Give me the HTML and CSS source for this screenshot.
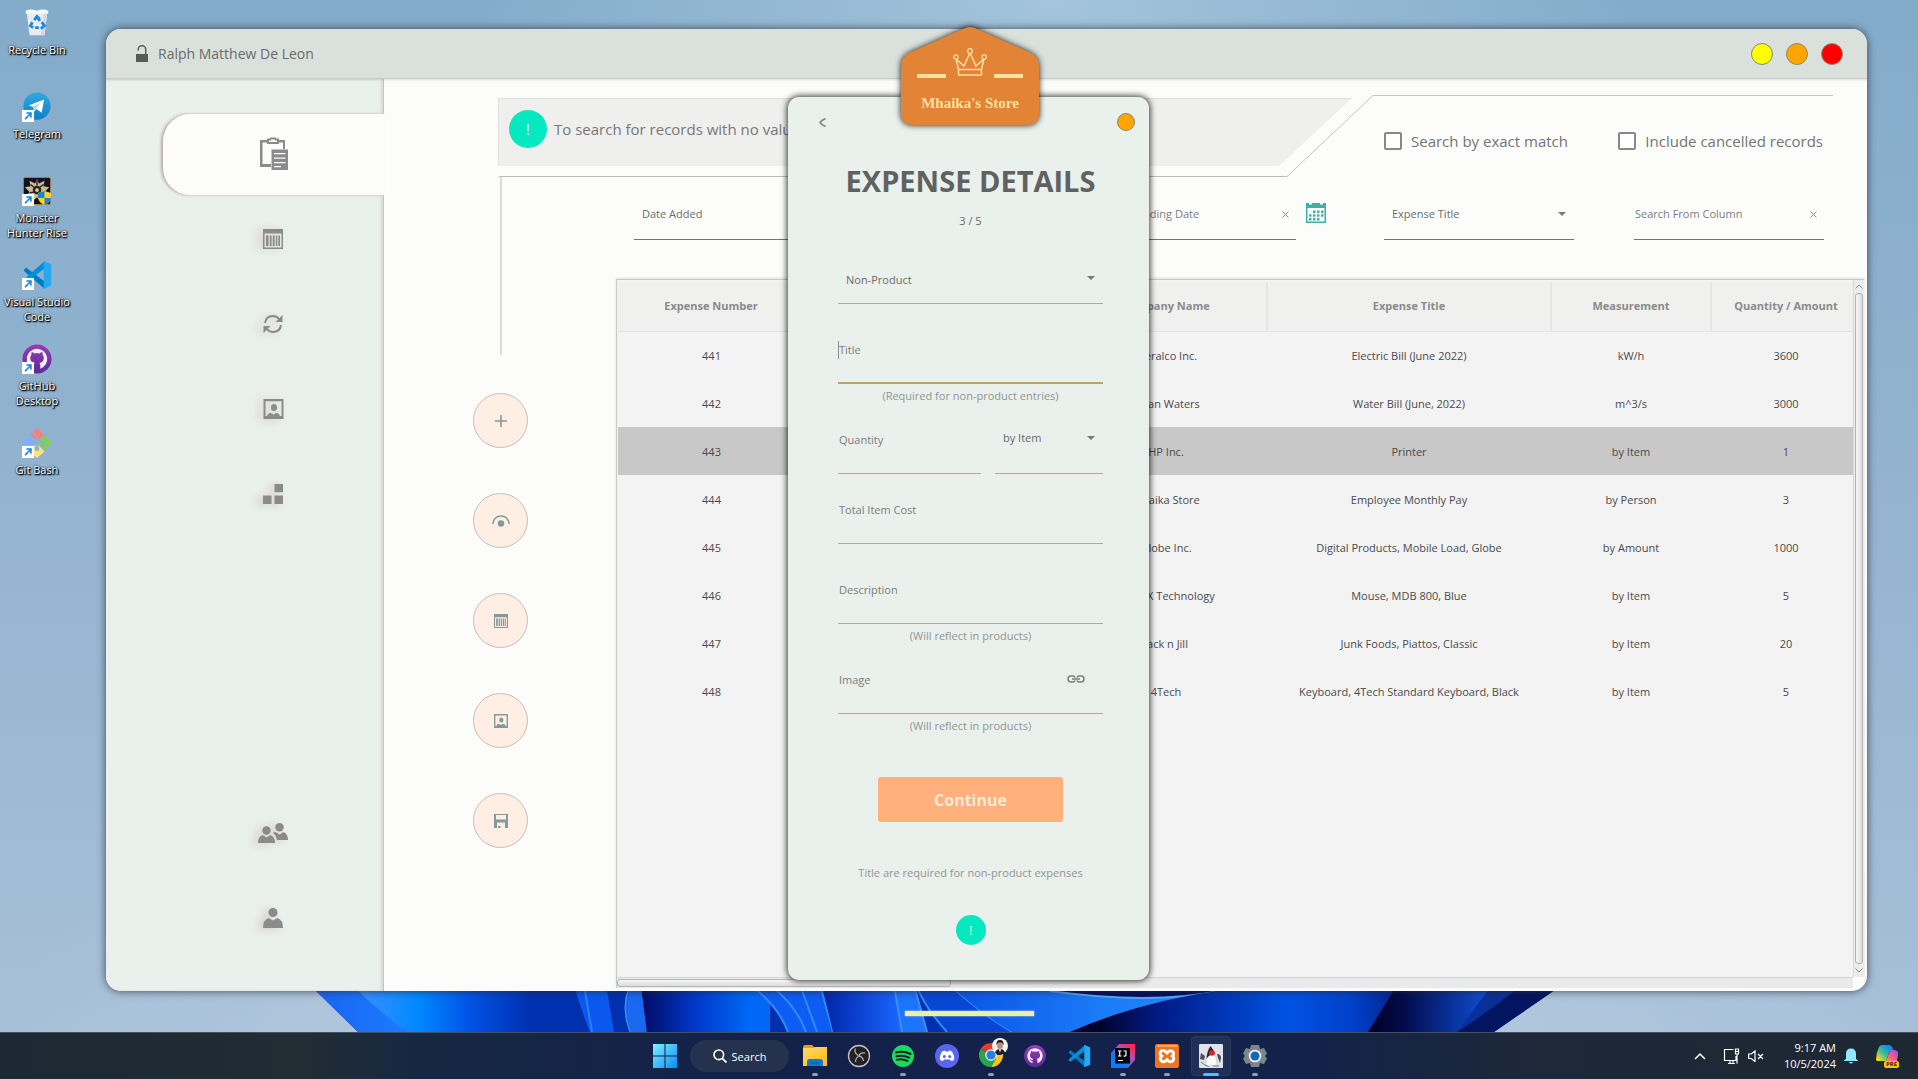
FILE: index.html
```html
<!DOCTYPE html>
<html lang="en">
<head>
<meta charset="utf-8">
<title>Mhaika's Store</title>
<link rel="stylesheet" href="styles.css">
</head>
<body>
<svg class="defs" aria-hidden="true">
  <defs>
    <linearGradient id="g-tg" x1="0" y1="0" x2="0" y2="1"><stop offset="0" stop-color="#2fa8e0"/><stop offset="1" stop-color="#0f80c4"/></linearGradient>
    <linearGradient id="g-gh" x1="0" y1="0" x2="0" y2="1"><stop offset="0" stop-color="#9a3bb8"/><stop offset="1" stop-color="#5b2a92"/></linearGradient>
    <linearGradient id="g-folder" x1="0" y1="0" x2="1" y2="1"><stop offset="0" stop-color="#ffd968"/><stop offset="1" stop-color="#fbb917"/></linearGradient>
    <linearGradient id="g-win" x1="0" y1="0" x2="1" y2="1"><stop offset="0" stop-color="#7df0ff"/><stop offset="1" stop-color="#0a8cf5"/></linearGradient>
    <linearGradient id="g-ij" x1="0" y1="1" x2="1" y2="0"><stop offset="0.3" stop-color="#087cfa"/><stop offset="0.65" stop-color="#b04fc0"/><stop offset="0.85" stop-color="#fe2857"/></linearGradient>
    <linearGradient id="g-cp1" x1="0" y1="1" x2="1" y2="0"><stop offset="0.1" stop-color="#ffd21e"/><stop offset="0.45" stop-color="#3fc08a"/><stop offset="0.8" stop-color="#1787f0"/></linearGradient>
    <linearGradient id="g-cp2" x1="0" y1="1" x2="1" y2="0"><stop offset="0" stop-color="#ff8a4c"/><stop offset="0.5" stop-color="#f0559b"/><stop offset="1" stop-color="#8a50e8"/></linearGradient>
    <symbol id="i-vscode" viewBox="0 0 32 32">
      <path d="M2 10.5 4.6 8.3 24 23v7.6L3 12.4Z" fill="#0079c4"/>
      <path d="M2 21.5l2.6 2.2L24 9V1.4L3 19.6Z" fill="#0090d8"/>
      <path d="M23 1l8 3.5v23L23 31Z" fill="#24a9f2"/>
    </symbol>
    <symbol id="i-github" viewBox="0 0 32 32">
      <circle cx="16" cy="16" r="15.5" fill="url(#g-gh)"/>
      <path d="M16 5a11 11 0 0 0-3.5 21.4V23c-2.6.5-3.3-1-3.8-1.9l1-.4c.8.7 1.4 1.3 2.9 1 .1-.7.5-1.2.9-1.5-3-.4-4.7-2-4.7-5.2 0-1.300.4-2.300 1.200-3.200-.2-.9-.2-2 .3-3 1.200 0 2.200.6 3 1.200a10 10 0 0 1 5.400 0c.8-.6 1.800-1.200 3-1.200.5 1 .5 2.100.3 3 .8.9 1.200 1.900 1.200 3.200 0 3.200-1.700 4.800-4.700 5.200.6.5 1 1.300 1 2.500v3.700A11 11 0 0 0 16 5Z" fill="#f4eefa"/>
    </symbol>
    <symbol id="i-shortcut" viewBox="0 0 12 12">
      <rect width="12" height="12" fill="#fff"/>
      <path d="M3 9.200 8 4.200M4.300 3.200h4.500v4.500" fill="none" stroke="#1583d8" stroke-width="1.500"/>
    </symbol>
    <symbol id="i-column" viewBox="0 0 20 20">
      <path fill-rule="evenodd" d="M0 0h20v20H0ZM1.500 4.500V18.500h17V4.500Z"/>
      <path d="M3 6.500h2.500V17H3ZM6.800 6.500h1.800V17H6.800ZM9.800 6.500h1.800V17H9.800ZM12.800 6.500h1.500V17h-1.500ZM15.300 6.500H17V17h-1.700Z"/>
    </symbol>
    <symbol id="i-portrait" viewBox="0 0 20 20">
      <path fill-rule="evenodd" d="M0 0h20v20H0ZM2 2.200V17h1.600c.3-2 2-2.800 3.500-3l2.900 1.600 2.900-1.600c1.500.2 3.200 1 3.500 3H18V2.200Z"/>
      <ellipse cx="10.500" cy="8.500" rx="3" ry="3.600"/>
    </symbol>
    <symbol id="i-alert" viewBox="0 0 30 30">
      <circle cx="15" cy="15" r="15" fill="#06e8c0"/>
      <path d="M14.300 11h1.500l-.3 6h-.9ZM14.300 18.300h1.500v1.500h-1.500Z" fill="#dffaf2"/>
    </symbol>
  </defs>
</svg>

<div class="desktop">
  <svg class="bloom" viewBox="0 0 1260 47" aria-hidden="true">
    <defs>
      <linearGradient id="b1"><stop offset="0" stop-color="#1a62f0"/><stop offset="1" stop-color="#1b7cff"/></linearGradient>
      <linearGradient id="b2" gradientUnits="userSpaceOnUse" x1="60" x2="230"><stop offset="0" stop-color="#3b8fff"/><stop offset="0.35" stop-color="#0088ff"/><stop offset="0.65" stop-color="#0052e6"/><stop offset="1" stop-color="#0030b0"/></linearGradient>
      <linearGradient id="b3" gradientUnits="userSpaceOnUse" x1="340" x2="450"><stop offset="0" stop-color="#010a60"/><stop offset="0.5" stop-color="#0138c8"/><stop offset="1" stop-color="#0068f8"/></linearGradient>
      <linearGradient id="b4" gradientUnits="userSpaceOnUse" x1="525" x2="600"><stop offset="0" stop-color="#0226a8"/><stop offset="1" stop-color="#1a66ff"/></linearGradient>
      <linearGradient id="b5" gradientUnits="userSpaceOnUse" x1="660" x2="900"><stop offset="0" stop-color="#0b55e8"/><stop offset="0.6" stop-color="#1b7cf8"/><stop offset="1" stop-color="#2488f5"/></linearGradient>
      <linearGradient id="b6" gradientUnits="userSpaceOnUse" x1="800" x2="1090"><stop offset="0" stop-color="#01042c"/><stop offset="0.2" stop-color="#021a86"/><stop offset="0.65" stop-color="#0052e4"/><stop offset="0.88" stop-color="#003fc8"/><stop offset="1" stop-color="#02289a"/></linearGradient>
      <linearGradient id="b7" gradientUnits="userSpaceOnUse" x1="1075" x2="1185"><stop offset="0" stop-color="#01032a"/><stop offset="0.25" stop-color="#020a4a"/><stop offset="1" stop-color="#0f4cd0"/></linearGradient>
    </defs>
    <path d="M10 0H1262L1194 47H58Z" fill="#0130ae"/>
    <path d="M10 0H52L107 47H58Z" fill="url(#b1)"/>
    <path d="M52 0H230V47H107Q76 24 52 0Z" fill="url(#b2)"/>
    <path d="M274 0H306L314 47H290Q280 22 274 0Z" fill="#0a58ee"/>
    <path d="M284 0 292 47" stroke="#2484fa" stroke-width="2"/>
    <path d="M330 0H341L347 47H330Q320 22 330 0Z" fill="#1868f0"/>
    <path d="M330 0Q320 22 330 47" stroke="#4aa0ff" fill="none"/>
    <path d="M341 0H470V47H347Z" fill="url(#b3)"/>
    <path d="M450 0Q478 20 488 47H533L522 0Z" fill="#0d5cf4"/>
    <path d="M450 0Q478 20 488 47M470 0Q496 20 506 47M500 0 517 47M520 0 533 47" stroke="#2f8cff" stroke-width="2" fill="none"/>
    <path d="M522 0H594L602 47H533Z" fill="url(#b4)"/>
    <path d="M594 0H614L627 47H602Z" fill="#1b74fa"/>
    <path d="M594 0 602 47M614 0 627 47" stroke="#3a90ff" stroke-width="2"/>
    <path d="M614 0H650Q680 28 712 47H647Q628 24 614 0Z" fill="#0846d6"/>
    <path d="M616 0Q626 24 647 47M650 0Q680 28 712 47" stroke="#2f88f8" stroke-width="2" fill="none"/>
    <path d="M650 0H920V8Q850 18 770 47H712Q680 28 650 0Z" fill="url(#b5)"/>
    <path d="M750 0H930L916 6Q850 20 753 6Z" fill="#020c60"/>
    <path d="M750 6Q850 20 920 6" stroke="#58a8ff" stroke-width="2" fill="none"/>
    <path d="M770 47Q840 16 930 4V0H1098L1068 47Z" fill="url(#b6)"/>
    <path d="M1097 0H1192L1157 47H1068Z" fill="url(#b7)"/>
    <path d="M1192 0H1222L1157 47Q1180 24 1192 0Z" fill="#0a3096"/>
    <path d="M1222 0H1262L1194 47H1157Q1190 26 1222 0Z" fill="#031460"/>
  </svg>

  <ul class="shortcuts">
    <li><svg viewBox="0 0 32 32"><path d="M5 4h22l-3 25H8Z" fill="#e9edf0"/><path d="M5 4h22l-3 25h-4L23 5H9Z" fill="#d3d9de"/><path d="M4 3q5-3 12 0 6-3 12 0v3H4Z" fill="#f7f8f9"/><path d="M16 9l3 5M19 12l-3-3-3 4M11 15l-2 4 3 2M21 15l3 4-4 3M14 21h4" stroke="#1f8ae0" stroke-width="3" fill="none"/></svg><span>Recycle Bin</span></li>
    <li><svg viewBox="0 0 32 32"><circle cx="16" cy="15" r="14.500" fill="url(#g-tg)"/><path d="M7 14.500 23.500 8 21 22l-5.500-4-2.500 3-1-5Z" fill="#fff"/><path d="M12 16 20 11l-5 6.500-2 3Z" fill="#b5d6ea"/><use href="#i-shortcut" y="19" width="13" height="13"/></svg><span>Telegram</span></li>
    <li><svg viewBox="0 0 32 32"><rect x="1.500" y="1.500" width="29" height="29" rx="2" fill="#10131d" stroke="#a08a58"/><path d="M16 3l2 5 6-3-1 6 6 1-5 5 4 5-6-1-1 6-5-4-5 4-1-6-6 1 4-5-5-5 6-1-1-6 6 3Z" fill="#c8bb92"/><circle cx="16" cy="15" r="4.500" fill="#2a2520"/><path d="M9 9l4 3M23 9l-4 3M16 4v6M8 18l5-1" stroke="#2a2520" stroke-width="1.500"/><circle cx="16" cy="15" r="2" fill="#d8cca5"/><path d="M24 16l7 2v5q-1 6-7 8-6-2-7-8v-5Z" fill="#ffd21e"/><path d="M24 16v7.500h-7V18ZM24 23.500h7q-1 5-7 7.500Z" fill="#1686d9"/><use href="#i-shortcut" y="19" width="13" height="13"/></svg><span>Monster Hunter Rise</span></li>
    <li><svg viewBox="0 0 32 32"><use href="#i-vscode" width="32" height="32"/><use href="#i-shortcut" y="19" width="13" height="13"/></svg><span>Visual Studio Code</span></li>
    <li><svg viewBox="0 0 32 32"><use href="#i-github" width="32" height="32"/><use href="#i-shortcut" y="19" width="13" height="13"/></svg><span>GitHub Desktop</span></li>
    <li><svg viewBox="0 0 32 32"><path d="M16 0l7 7-7 7-7-7Z" fill="#ff7b78"/><path d="M8 8l7 8-7 8-8-8Z" fill="#7fb0ff"/><path d="M24 8l8 8-8 8-8-8Z" fill="#82cf5c"/><path d="M16 17l8 8-8 7-8-7Z" fill="#ffe27a"/><path d="M11 4l5 6v14M16 12l6 5" stroke="#8db0cc" stroke-width="2" fill="none"/><circle cx="16" cy="22" r="2.500" fill="#8db0cc"/><circle cx="22" cy="17" r="2.500" fill="#8db0cc"/><use href="#i-shortcut" y="19" width="13" height="13"/></svg><span>Git Bash</span></li>
  </ul>

  <section class="window" aria-label="Expenses">
    <header class="titlebar">
      <svg class="lock" viewBox="0 0 12 17"><path d="M0 9h12v8H0Z"/><path d="M2.300 5.500V4a3.700 3.200 0 0 1 7.400 0v6" fill="none" stroke="#575a58" stroke-width="1.500"/></svg>
      <span class="user">Ralph Matthew De Leon</span>
      <div class="dots">
        <button class="dot yellow" aria-label="Minimize"></button>
        <button class="dot orange" aria-label="Restore"></button>
        <button class="dot red" aria-label="Close"></button>
      </div>
    </header>
    <div class="window-body">
      <nav class="sidebar">
        <a href="#expenses" class="active" aria-label="Expenses"><svg width="30" height="34" viewBox="0 0 30 34"><path fill-rule="evenodd" d="M1 3h7V1.500h3V.5h6v1h3V3h6v9H12v18H1ZM3.500 5.500v21.500H12V12h12V5.500H20V7H8V5.500ZM10 3.500V5h8V3.500h-2V2.500h-4v1Z"/><path fill-rule="evenodd" d="M12.500 12.500H29V33H12.500ZM15 16v1.300h11.500V16ZM15 20.500v1.300h11.500v-1.300ZM15 25v1.300h11.500V25ZM15 29v1.300h7V29Z"/></svg></a>
        <a href="#products" aria-label="Products"><svg width="20" height="20"><use href="#i-column"/></svg></a>
        <a href="#sync" aria-label="Transactions"><svg width="20" height="20" viewBox="0 0 20 20"><path d="M2 9Q3 2 10 2q4 0 6 3M18 11q-1 7-8 7-4 0-6-3" fill="none" stroke="#8b8b8b" stroke-width="2"/><path d="M19.500 1v7h-7ZM.5 19v-7h7Z"/></svg></a>
        <a href="#contacts" aria-label="Contacts"><svg width="21" height="20"><use href="#i-portrait"/></svg></a>
        <a href="#inventory" aria-label="Inventory"><svg width="20" height="20" viewBox="0 0 20 20"><path d="M11.500 0H20v8.300h-8.500ZM0 11.500h8.500V20H0ZM11.500 11.500H20V20h-8.500Z"/></svg></a>
        <a href="#team" class="push" aria-label="Team"><svg width="30" height="20" viewBox="0 0 30 20"><circle cx="8.500" cy="7.500" r="4.200"/><path d="M0 20q0-6 4.500-8l4 2.500 4-2.500Q17 14 17 20Z"/><circle cx="21.500" cy="4.200" r="4.200"/><path d="M15 9.500l2.500-.5 4 2.500 4-2.500q4.500 2 4.500 8H19q-.5-4-4-7.500Z"/></svg></a>
        <a href="#profile" aria-label="Profile"><svg width="20" height="20" viewBox="0 0 20 20"><circle cx="10" cy="4.500" r="4.500"/><path d="M0 20q0-8 5.500-10l4.500 2.500L14.500 10Q20 12 20 20Z"/></svg></a>
      </nav>

      <main class="content">
        <div class="top-row">
          <div class="notice-slot">
            <div class="notice"><svg width="38" height="38"><use href="#i-alert"/></svg><span>To search for records with no value</span></div>
          </div>
          <svg class="slope" viewBox="0 0 86 82" aria-hidden="true"><path d="M0 81.500 86 .5" fill="none" stroke="#c4c4c4"/></svg>
          <div class="options">
            <label><input type="checkbox"><span>Search by exact match</span></label>
            <label><input type="checkbox"><span>Include cancelled records</span></label>
          </div>
        </div>
        <div class="lower">
          <div class="actions">
            <div class="rail"></div>
            <button aria-label="Add"><svg width="12" height="12" viewBox="0 0 12 12"><path d="M5.200 0h1.600v5.200H12v1.600H6.800V12H5.200V6.800H0V5.200h5.200Z"/></svg></button>
            <button aria-label="View"><svg width="18" height="12" viewBox="0 0 18 12"><path d="M.8 9Q2 1 9 1t8.200 8" fill="none" stroke="#84999a" stroke-width="1.500"/><circle cx="9" cy="8.500" r="3.200"/></svg></button>
            <button aria-label="Columns"><svg width="14" height="14"><use href="#i-column"/></svg></button>
            <button aria-label="Contact"><svg width="14" height="14"><use href="#i-portrait"/></svg></button>
            <button aria-label="Save"><svg width="14" height="14" viewBox="0 0 14 14"><path fill-rule="evenodd" d="M0 0h14v14H0ZM2 1v4.500h10V1ZM3 8.500V14h1v-2h2.500v2H11V8.500Z"/></svg></button>
          </div>
          <div class="records">
            <div class="filters">
              <div class="pick"><select aria-label="Date field"><option>Date Added</option></select></div>
              <div class="entry short push-left"><input type="text" aria-label="Ending date" placeholder="Ending Date"><button aria-label="Clear date"><svg width="7" height="7" viewBox="0 0 7 7"><path d="M.5.5l6 6M6.500.5l-6 6"/></svg></button></div>
              <button class="calendar" aria-label="Choose date"><svg width="20" height="20" viewBox="0 0 20 20"><path fill-rule="evenodd" d="M0 0h20v20H0ZM1.500 5v13.500h17V5Z"/><path d="M7 7.500h2.500V10H7ZM11 7.500h2.500V10H11ZM15 7.500h2.500V10H15ZM3 11.300h2.500v2.500H3ZM7 11.300h2.500v2.500H7ZM11 11.300h2.500v2.500H11ZM15 11.300h2.500v2.500H15ZM3 15h2.500v2.500H3ZM7 15h2.500v2.500H7ZM11 15h2.500v2.500H11Z"/><path d="M3 0h3v1.500H3ZM14 0h3v1.500h-3Z" fill="#fff"/></svg></button>
              <div class="pick after-date"><select aria-label="Column"><option>Expense Title</option></select></div>
              <div class="entry after-pick"><input type="text" aria-label="Search from column" placeholder="Search From Column"><button aria-label="Clear search"><svg width="7" height="7" viewBox="0 0 7 7"><path d="M.5.5l6 6M6.500.5l-6 6"/></svg></button></div>
            </div>
            <div class="grid-box">
              <div class="grid-view">
                <table>
                  <colgroup><col class="c-num"><col class="c-date"><col class="c-company"><col><col class="c-measure"><col class="c-qty"></colgroup>
                  <thead><tr><th>Expense Number</th><th></th><th>Company Name</th><th>Expense Title</th><th>Measurement</th><th>Quantity / Amount</th></tr></thead>
                  <tbody>
                    <tr><td>441</td><td></td><td>Meralco Inc.</td><td>Electric Bill (June 2022)</td><td>kW/h</td><td>3600</td></tr>
                    <tr><td>442</td><td></td><td>Clean Waters</td><td>Water Bill (June, 2022)</td><td>m^3/s</td><td>3000</td></tr>
                    <tr class="selected"><td>443</td><td></td><td>HP Inc.</td><td>Printer</td><td>by Item</td><td>1</td></tr>
                    <tr><td>444</td><td></td><td>Mhaika Store</td><td>Employee Monthly Pay</td><td>by Person</td><td>3</td></tr>
                    <tr><td>445</td><td></td><td>Globe Inc.</td><td>Digital Products, Mobile Load, Globe</td><td>by Amount</td><td>1000</td></tr>
                    <tr><td>446</td><td></td><td>INFREX Technology</td><td>Mouse, MDB 800, Blue</td><td>by Item</td><td>5</td></tr>
                    <tr><td>447</td><td></td><td>Jack n Jill</td><td>Junk Foods, Piattos, Classic</td><td>by Item</td><td>20</td></tr>
                    <tr><td>448</td><td></td><td>4Tech</td><td>Keyboard, 4Tech Standard Keyboard, Black</td><td>by Item</td><td>5</td></tr>
                  </tbody>
                </table>
              </div>
              <div class="vbar"><svg width="8" height="5" viewBox="0 0 8 5"><path d="M.5 4.500 4 1l3.500 3.500"/></svg><div class="vthumb"></div><svg width="8" height="5" viewBox="0 0 8 5"><path d="M.5.5 4 4 7.500.5"/></svg></div>
              <div class="hbar"><div class="hthumb"></div></div>
            </div>
          </div>
        </div>
      </main>
    </div>
  </section>

  <form class="dialog" aria-label="Expense details">
    <div class="dialog-head">
      <button type="button" class="back" aria-label="Back"><svg width="7" height="9" viewBox="0 0 7 9"><path d="M6.500.5Q3 2 1 4.500 3 7 6.500 8.500" fill="none" stroke="#858a87" stroke-width="1.800"/></svg></button>
      <button type="button" class="dot small orange" aria-label="Minimize dialog"></button>
    </div>
    <h1>EXPENSE DETAILS</h1>
    <p class="step">3 / 5</p>
    <div class="pick kind"><select aria-label="Entry type"><option>Non-Product</option></select></div>
    <div class="entry gap-30 focused"><input type="text" aria-label="Title" placeholder="Title"><i class="caret"></i></div>
    <p class="hint">(Required for non-product entries)</p>
    <div class="pair gap-16">
      <div class="entry"><input type="text" aria-label="Quantity" placeholder="Quantity"></div>
      <div class="pick unit"><select aria-label="Unit"><option>by Item</option></select></div>
    </div>
    <div class="entry gap-20"><input type="text" aria-label="Total item cost" placeholder="Total Item Cost"></div>
    <div class="entry gap-30"><input type="text" aria-label="Description" placeholder="Description"></div>
    <p class="hint">(Will reflect in products)</p>
    <div class="entry gap-16 image"><input type="text" aria-label="Image" placeholder="Image"><button type="button" aria-label="Browse image"><svg width="18" height="8" viewBox="0 0 18 8"><path d="M8 2.500Q7.500 1 6 1H4a3 3 0 0 0 0 6h2q1.500 0 2-1.500M10 2.500Q10.500 1 12 1h2a3 3 0 0 1 0 6h-2q-1.500 0-2-1.500M5 4h8"/></svg></button></div>
    <p class="hint">(Will reflect in products)</p>
    <button type="button" class="continue">Continue</button>
    <p class="note">Title are required for non-product expenses</p>
    <svg class="alert" width="30" height="30"><use href="#i-alert"/></svg>
  </form>

  <div class="badge">
    <svg class="badge-shape" viewBox="0 0 138 98" aria-hidden="true"><path d="M63 1.500Q69-1.500 75 1.500L130 26Q138 30 138 40V86Q138 98 126 98H12Q0 98 0 86V40Q0 30 8 26Z" fill="#e28336"/></svg>
    <div class="crown-row">
      <i></i>
      <svg width="34" height="28" viewBox="0 0 34 28"><path d="M5.500 27.200V21L2.800 10.500M28.500 27.200V21l2.700-10.500M5.500 21.500h23M5.500 27h23M3 11l8 7 6-13 6 13 8-7" fill="none" stroke="#fde0a0" stroke-width="1.500"/><circle cx="17" cy="3" r="2.400" fill="#e28336" stroke="#fde0a0" stroke-width="1.300"/><circle cx="2.800" cy="9" r="2.200" fill="#e28336" stroke="#fde0a0" stroke-width="1.300"/><circle cx="31.200" cy="9" r="2.200" fill="#e28336" stroke="#fde0a0" stroke-width="1.300"/></svg>
      <i></i>
    </div>
    <span>Mhaika's Store</span>
  </div>
  <div class="handle"></div>

  <footer class="taskbar">
    <div></div>
    <div class="apps">
      <button aria-label="Start"><svg width="23" height="23" viewBox="0 0 23 23"><path d="M0 0h11v11H0ZM12 0h11v11H12ZM0 12h11v11H0ZM12 12h11v11H12Z" fill="url(#g-win)"/></svg></button>
      <button class="search"><svg width="14" height="14" viewBox="0 0 14 14"><circle cx="5.800" cy="5.800" r="4.800" fill="none" stroke="#fff" stroke-width="1.600"/><path d="M9.300 9.300 13.500 13.500" stroke="#fff" stroke-width="1.800"/></svg><span>Search</span></button>
      <button class="open" aria-label="File Explorer"><svg viewBox="0 0 24 24"><path d="M0 3.500Q0 1 2 1h7l3 3H0Z" fill="#e8a10c"/><path d="M0 4h10l2-1h12v19H0Z" fill="url(#g-folder)"/><path d="M4 22v-4q0-3 3-3h10q3 0 3 3v4Z" fill="#0f78d0"/><path d="M8 19h8" stroke="#0a5da8"/></svg></button>
      <button aria-label="OBS"><svg viewBox="0 0 24 24"><circle cx="12" cy="12" r="10.500" fill="#231f22" stroke="#c4c4c8" stroke-width="1.300"/><path d="M8.500 4.500q-2 4.500 3.500 7.500 1-4 6-3M12 12q-3.500 2-3.500 6M12 12q4 1 4.500 5" stroke="#a9a9af" stroke-width="1.300" fill="none"/></svg></button>
      <button class="open" aria-label="Spotify"><svg viewBox="0 0 24 24"><circle cx="12" cy="12" r="11" fill="#1ed760"/><path d="M5 8.500q7.500-2 14.500 1.500M5.500 12.300q6.500-1.800 12.500 1.400M6 15.800q5.500-1.300 10.500 1.200" stroke="#11251a" stroke-width="2" fill="none" stroke-linecap="round"/></svg></button>
      <button aria-label="Discord"><svg viewBox="0 0 24 24"><circle cx="12" cy="12" r="12" fill="#5865f2"/><path d="M7 7.500q2-1 3-1l.5 1h3l.5-1q1 0 3 1 2.500 4 2.200 8-1.500 1.500-3.200 1.500l-1-1.500H9l-1 1.500q-1.700 0-3.200-1.500Q4.500 11.500 7 7.500Z" fill="#fff"/><circle cx="9.300" cy="12.500" r="1.500" fill="#5865f2"/><circle cx="14.700" cy="12.500" r="1.500" fill="#5865f2"/></svg></button>
      <button class="open" aria-label="Chrome"><svg class="chrome" viewBox="0 0 30 30"><path d="M12 17 1.600 11a12 12 0 0 1 20.800 0Z" fill="#e33b2e"/><path d="M12 17h10.400v-6A12 12 0 0 1 12 29l5-9Z" fill="#fcc31e"/><path d="M12 17l5 4-5 8A12 12 0 0 1 1.600 11Z" fill="#2ba24c"/><circle cx="12" cy="17" r="5.800" fill="#fff"/><circle cx="12" cy="17" r="4.600" fill="#2b7de9"/><circle cx="21" cy="8" r="8" fill="#f4f2f2"/><path d="M16 15q1-4 5-4t5 4q-5 2.500-10 0Z" fill="#17171b"/><path d="M20 11h2l-1 4Z" fill="#fff"/><ellipse cx="21" cy="7" rx="3" ry="4" fill="#b98d76"/><path d="M17.500 7q-.5-5 3.500-5t3.500 5L23 4.500h-4Z" fill="#17171b"/></svg></button>
      <button aria-label="GitHub Desktop"><svg viewBox="-1 -1 34 34"><use href="#i-github" width="32" height="32"/></svg></button>
      <button aria-label="Visual Studio Code"><svg viewBox="0 0 32 32"><use href="#i-vscode" width="32" height="32"/></svg></button>
      <button class="open" aria-label="IntelliJ IDEA"><svg viewBox="0 0 24 24"><path d="M8 0h16v16l-7 8H0V9Z" fill="url(#g-ij)"/><rect x="4" y="4" width="15" height="15.500" fill="#000"/><path d="M7 7h3.500M7 12h3.500M8.700 7v5M12.500 7H15v4q0 1.300-2.500 1M7 16.500h5" stroke="#fff" stroke-width="1.200" fill="none"/></svg></button>
      <button class="open" aria-label="XAMPP"><svg viewBox="0 0 24 24"><rect width="24" height="24" rx="2" fill="#f0731f"/><rect x="2" y="1" width="20" height="2" fill="#f9a468"/><path d="M8 6.500a3 3 0 0 0-1.500 5.500A3 3 0 1 0 10.500 17L12 15.500 13.500 17a3 3 0 1 0 4-5 3 3 0 1 0-4-4.500L12 9l-1.500-1.500A3 3 0 0 0 8 6.500Z" fill="none" stroke="#fff" stroke-width="3"/></svg></button>
      <button class="open current" aria-label="Java application"><svg viewBox="0 0 24 24"><rect width="24" height="24" rx="1" fill="#dfe2ea"/><path d="M2 9l4 3-1 4-4-1ZM18 10q4 0 4 4l-1 5-2-5Z" fill="#4a5058"/><path d="M11.500 2Q17 9 18 20q0 2-3 2l-2-1-3 1.500q-3 0-3-3Q7 8 11.500 2Z" fill="#fafafa" stroke="#b8bcc4" stroke-width=".5"/><path d="M11.500 2q3 3.500 4.500 8-2 1-4 1t-4.500 4Q8 7 11.500 2Z" fill="#26282c"/><circle cx="13" cy="9" r="2.800" fill="#e02424"/><path d="M2 18q4 4 8 4.500M14 22h6" stroke="#777" fill="none"/></svg></button>
      <button class="open" aria-label="Settings"><svg viewBox="0 0 24 24"><path d="M8 1h8l1 4 4-1 3 5.500-2 2.500 2 2.500L21 20l-4-1-1 4H8l-1-4-4 1-3-5.500L2 12 0 9.500 3 4l4 1Z" fill="#7d858b"/><circle cx="12" cy="12" r="6.300" fill="#eef3f7"/><circle cx="12" cy="12" r="4.500" fill="#1068bd"/></svg></button>
    </div>
    <div class="tray">
      <svg width="12" height="8" viewBox="0 0 12 8"><path d="M1 7l5-5 5 5" fill="none" stroke="#fff" stroke-width="1.500"/></svg>
      <svg class="net" width="17" height="17" viewBox="0 0 17 17"><path d="M10.500 1.500H1.500v11H13V8M5 15.500h7M7 12.500v3M10 12.500v3M12.500 1h3v5h-3ZM12.500 3.500h3M14 6v9.500" fill="none" stroke="#fff" stroke-width="1.200"/></svg>
      <svg width="16" height="12" viewBox="0 0 16 12"><path d="M.7 4h2.500L7 1v10.500L3.200 8.500H.7ZM10 4l5 5M15 4l-5 5" fill="none" stroke="#fff" stroke-width="1.200"/></svg>
      <div class="clock"><span>9:17 AM</span><span>10/5/2024</span></div>
      <svg class="bell" width="14" height="16" viewBox="0 0 14 16"><path d="M2 11V6q0-5.500 5-5.500T12 6v5l2 1.500V13H0v-.5ZM4.500 14h5L7 15.800Z" fill="#92e6ff"/></svg>
      <svg class="copilot" width="24" height="24" viewBox="0 0 24 24"><path d="M1 16Q1 9 4 3q1-2 3.500-2H14q2.500 0 3.500 3l1 3h-4L11 17H2Z" fill="url(#g-cp1)"/><path d="M11 17l3-8q1-3 4-3h2q4 1 3 5l-1 6Z" fill="url(#g-cp2)"/></svg>
      <small>PRE</small>
    </div>
  </footer>
</div>
</body>
</html>
```
FILE: styles.css
```css
* { box-sizing: border-box; }
body {
  margin: 0;
  font-family: "Open Sans", "Noto Sans", sans-serif;
  font-size: 11px;
  color: #6a6c6a;
}
button { padding: 0; border: 0; background: none; font: inherit; color: inherit; display: flex; align-items: center; justify-content: center; }
p, h1, ul { margin: 0; padding: 0; }
svg { display: block; flex: none; }
.defs { position: absolute; width: 0; height: 0; }

.desktop {
  position: relative;
  min-height: 100vh;
  overflow: hidden;
  background:
    radial-gradient(ellipse 50% 40% at 50% 100%, #bccfe2 0%, rgba(188, 207, 226, 0) 100%),
    radial-gradient(ellipse 30% 30% at 55% 0%, #a3c4dc 0%, rgba(163, 196, 220, 0) 100%),
    linear-gradient(180deg, #83acca 0%, #93b3d0 45%, #a9c1d9 100%);
}
.bloom { position: absolute; left: calc(50% - 659px); bottom: 47px; width: 1260px; height: 47px; }

/* desktop shortcuts */
.shortcuts { position: absolute; left: 0; top: 8px; width: 74px; list-style: none; }
.shortcuts li { height: 84px; display: flex; flex-direction: column; align-items: center; gap: 4px; }
.shortcuts svg { width: 32px; height: 30px; }
.shortcuts span {
  line-height: 15px;
  text-align: center;
  color: #fff;
  text-shadow: 1px 1px 2px #000, 0 0 2px #000, 1px 1px 1px #000;
}

/* main window */
.window {
  position: absolute;
  inset: 29px 51px 88px 106px;
  isolation: isolate;
  display: flex;
  flex-direction: column;
  border-radius: 15px;
  overflow: hidden;
  background: #fcfdfb;
  box-shadow: 0 0 8px rgba(40, 40, 50, 0.8);
}
.titlebar {
  height: 50px;
  display: flex;
  align-items: center;
  padding: 0 24px 0 30px;
  background: #dae0dc;
  border-bottom: 1px solid #cfc6c6;
  box-shadow: 0 1px 2px rgba(120, 90, 90, 0.2);
  z-index: 1;
}
.lock { width: 12px; height: 17px; fill: #575a58; }
.user { margin-left: 10px; font-size: 14px; }
.dots { margin-left: auto; display: flex; gap: 13px; }
.dot { width: 22px; height: 22px; border-radius: 50%; border: 1px solid #8c8a6a; }
.dot.small { width: 18px; height: 18px; }
.yellow { background: #ff0; }
.orange { background: #ffa500; }
.red { background: #f00; }
.window-body { flex: 1; display: flex; min-height: 0; }

.sidebar {
  width: 278px;
  padding: 35px 0 31px 57px;
  display: flex;
  flex-direction: column;
  background: #eaf0ec;
  border-right: 1px solid #c8c2c2;
  box-shadow: inset -2px 0 2px rgba(120, 100, 100, 0.15);
}
.sidebar a { height: 85px; display: flex; align-items: center; justify-content: center; }
.sidebar svg { fill: #8b8b8b; filter: drop-shadow(-5px 1px 4px rgba(170, 120, 120, 0.3)); }
.sidebar .active {
  height: 81px;
  margin: 0 -1px 1px 0;
  padding-bottom: 2px;
  border-radius: 27px 0 0 27px;
  background: #fcfdfb;
  box-shadow: -2px 0 3px #b8adad;
}
.sidebar .active svg { filter: none; }
.sidebar .push { margin-top: auto; }

.content { flex: 1; min-width: 0; display: flex; flex-direction: column; padding: 16px 3px 3px 0; }
.top-row { display: flex; height: 82px; margin: 0 31px 0 115px; }
.notice-slot { flex: 1; min-width: 0; border-bottom: 1px solid #bcbcbc; padding-top: 3px; }
.notice {
  height: 68px;
  margin: 0 -65px 0 -1px;
  padding: 0 0 8px 10px;
  display: flex;
  align-items: center;
  gap: 7px;
  font-size: 15px;
  color: #787878;
  background: #efefee;
  border-top: 1px solid #dfdfdf;
  border-left: 1px solid #dfdfdf;
  clip-path: polygon(0 0, 100% 0, calc(100% - 73px) 100%, 0 100%);
}
.slope { width: 86px; height: 82px; }
.options {
  width: 460px;
  padding: 8px 10px 0 11px;
  display: flex;
  align-items: center;
  justify-content: space-between;
  border-top: 1px solid #c6c6c6;
  font-size: 15px;
  color: #747474;
}
.options label { display: flex; align-items: center; gap: 9px; }
.options input { appearance: none; width: 18px; height: 18px; margin: 0; border: 2px solid #8a8886; border-radius: 2px; background: #fff; }

.lower { flex: 1; display: flex; min-height: 0; }
.actions { width: 232px; padding-left: 1px; display: flex; flex-direction: column; align-items: center; gap: 45px; }
.rail { width: 2px; height: 178px; margin-bottom: -7px; background: #dcdcdc; }
.actions button { width: 55px; height: 55px; border-radius: 50%; border: 1px solid #c4bebc; background: #feeee3; }
.actions svg { fill: #84999a; }

.records { flex: 1; min-width: 0; display: flex; flex-direction: column; }
.filters { height: 102px; display: flex; align-items: flex-start; padding: 13px 40px 0 18px; }
.filters .pick, .filters .entry { width: 190px; border-color: #747474; }
.filters .short { width: 160px; }
.push-left { margin-left: auto; }
.filters .calendar { margin: 13px 0 0 10px; fill: #3db1a8; }
.after-date { margin-left: 58px; }
.after-pick { margin-left: 60px; }

/* underlined fields */
.pick, .entry { position: relative; height: 50px; border-bottom: 1px solid #b9a3a3; }
.pick select, .entry input {
  appearance: none;
  display: block;
  width: 100%;
  height: 49px;
  margin: 0;
  border: 0;
  outline: 0;
  background: none;
  font: inherit;
  color: inherit;
}
.pick select { padding: 0 8px; }
.filters .pick select { padding-bottom: 2px; }
.pick::after {
  content: "";
  position: absolute;
  right: 8px;
  top: 22px;
  border: 4px solid transparent;
  border-top-color: #777977;
  border-bottom: 0;
}
.entry { display: flex; }
.entry input { flex: 1; min-width: 0; padding: 0 0 18px 1px; }
.filters .entry input { padding-bottom: 2px; }
.entry input::placeholder { color: #7b7e7c; opacity: 1; }
.entry button { width: 22px; height: 48px; }
.entry svg { fill: none; stroke: #8a8c90; }
.entry.focused { border-bottom: 2px solid #c4a062; }
.caret { position: absolute; left: 0; top: 7px; width: 1px; height: 18px; background: #8d918e; }

/* records table */
.grid-box {
  flex: 1;
  min-height: 0;
  display: grid;
  grid-template: 1fr 11px / 1fr 11px;
  border-top: 1px solid #c9c9c9;
  border-left: 1px solid #c9c9c9;
  box-shadow: 0 -1px 2px rgba(0, 0, 0, 0.12);
}
.grid-view { overflow: hidden; background: #f3f3f3; padding: 2px 0 0 1px; }
table { width: calc(100% + 9px); table-layout: fixed; border-collapse: collapse; }
.c-num { width: 187px; }
.c-date { width: 260px; }
.c-company { width: 202px; }
.c-measure { width: 160px; }
.c-qty { width: 150px; }
th, td { height: 48px; padding: 0; text-align: center; white-space: nowrap; color: #4a4a4a; }
th { height: 49px; padding-bottom: 2px; font-weight: 700; color: #8b8b8b; background: #f0f0ef; border-right: 2px solid #e6e6e6; border-bottom: 1px solid #e4e4e4; }
.selected td { background: #c8c8c8; }
.vbar { background: #ececec; border-left: 1px solid #d8d8d8; padding: 4px 0; display: flex; flex-direction: column; align-items: center; gap: 4px; }
.vbar svg { fill: none; stroke: #8a8a8a; }
.vthumb { flex: 1; width: 8px; border: 1px solid #b5b5b5; border-radius: 3px; background: linear-gradient(90deg, #f6f6f6, #dcdcdc); }
.hbar { background: #eaeaea; border-top: 1px solid #d4d4d4; padding: 1px 0; }
.hthumb { width: 27%; height: 8px; border: 1px solid #b5b5b5; border-radius: 3px; background: linear-gradient(#f6f6f6, #dcdcdc); }

/* expense dialog */
.dialog {
  position: absolute;
  left: calc(50% - 171px);
  top: 97px;
  width: 361px;
  padding: 0 46px 35px 50px;
  display: flex;
  flex-direction: column;
  border-radius: 11px;
  background: #eaf0ec;
  box-shadow: 0 0 6px 1px rgba(0, 0, 0, 0.8);
}
.dialog-head { height: 50px; margin: 0 -32px 0 -19px; display: flex; align-items: center; justify-content: space-between; }
h1 { margin-top: 14px; line-height: 40px; font-size: 29px; font-weight: 700; text-align: center; white-space: nowrap; color: #616161; }
.step { margin-top: 10px; line-height: 20px; text-align: center; }
.kind { margin-top: 23px; }
.kind select { padding-top: 1px; }
.gap-16 { margin-top: 16px; }
.gap-20 { margin-top: 20px; }
.gap-30 { margin-top: 30px; }
.hint, .note { line-height: 24px; text-align: center; color: #929693; }
.pair { display: flex; gap: 14px; }
.pair .entry { flex: 1; }
.unit { width: 108px; }
.unit select { padding-bottom: 22px; }
.unit::after { top: 12px; }
.image { padding-right: 16px; }
.image button { height: 30px; }
.image svg { stroke: #7b7e7c; stroke-width: 1.500; }
.continue { align-self: center; width: 185px; height: 45px; margin: 39px 0; border-radius: 3px; background: #ffb07d; color: #f3ead6; font-size: 16px; font-weight: 700; }
.alert { align-self: center; margin-top: 30px; }

.badge {
  position: absolute;
  left: calc(50% - 58px);
  top: 27px;
  width: 138px;
  height: 98px;
  padding-top: 21px;
  display: flex;
  flex-direction: column;
  align-items: center;
  gap: 16px;
  color: #fde0a0;
  font: 700 15px/22px "Liberation Serif", serif;
}
.badge-shape { position: absolute; inset: 0; width: 138px; height: 98px; overflow: visible; filter: drop-shadow(0 0 3px rgba(0, 0, 0, 0.9)); }
.crown-row, .badge span { position: relative; }
.crown-row { display: flex; align-items: flex-end; gap: 7px; }
.crown-row i { width: 29px; height: 4px; margin-bottom: -2px; background: #fde0a0; }
.handle { position: absolute; left: calc(50% - 54px); bottom: 63px; width: 129px; height: 5px; background: #efecae; box-shadow: 0 0 2px #efecae; }

/* taskbar */
.taskbar {
  position: absolute;
  left: 0;
  right: 0;
  bottom: 0;
  height: 47px;
  display: grid;
  grid-template-columns: 1fr auto 1fr;
  border-top: 1px solid #46505f;
  background: linear-gradient(90deg, #1c2833 0%, #212c33 16%, #162743 22%, #13214a 40%, #13224a 68%, #1d2838 80%, #1e2833 100%);
  color: #fff;
}
.apps { display: flex; padding-left: 2px; }
.apps button { position: relative; width: 44px; height: 46px; }
.apps button svg { width: 24px; height: 24px; }
.apps .search { width: 99px; height: 32px; margin: 7px 4px 0 3px; gap: 5px; border-radius: 16px; background: #24324e; }
.apps .search svg { width: 14px; height: 14px; }
.apps .chrome { width: 30px; height: 30px; margin: -6px 0 0 6px; }
.open::after { content: ""; position: absolute; left: 19px; bottom: 3px; width: 6px; height: 3px; border-radius: 2px; background: #98a0b0; }
.current::before { content: ""; position: absolute; inset: 3px 2px; border: 1px solid #2c3a5c; border-radius: 4px; background: #202f55; }
.current svg { position: relative; }
.apps .current::after { left: 14px; width: 16px; background: #4cc2ff; }
.tray { display: flex; align-items: center; justify-content: flex-end; padding-right: 19px; }
.net { margin: 0 8px 0 17px; }
.clock { width: 72px; display: flex; flex-direction: column; line-height: 16px; text-align: right; }
.bell { margin: 0 17px 0 8px; }
.tray small { position: absolute; right: 19px; bottom: 11px; padding: 0 2px; border-radius: 2px; background: #ffc20e; color: #222; font-size: 6px; line-height: 7px; font-weight: 700; }
```
